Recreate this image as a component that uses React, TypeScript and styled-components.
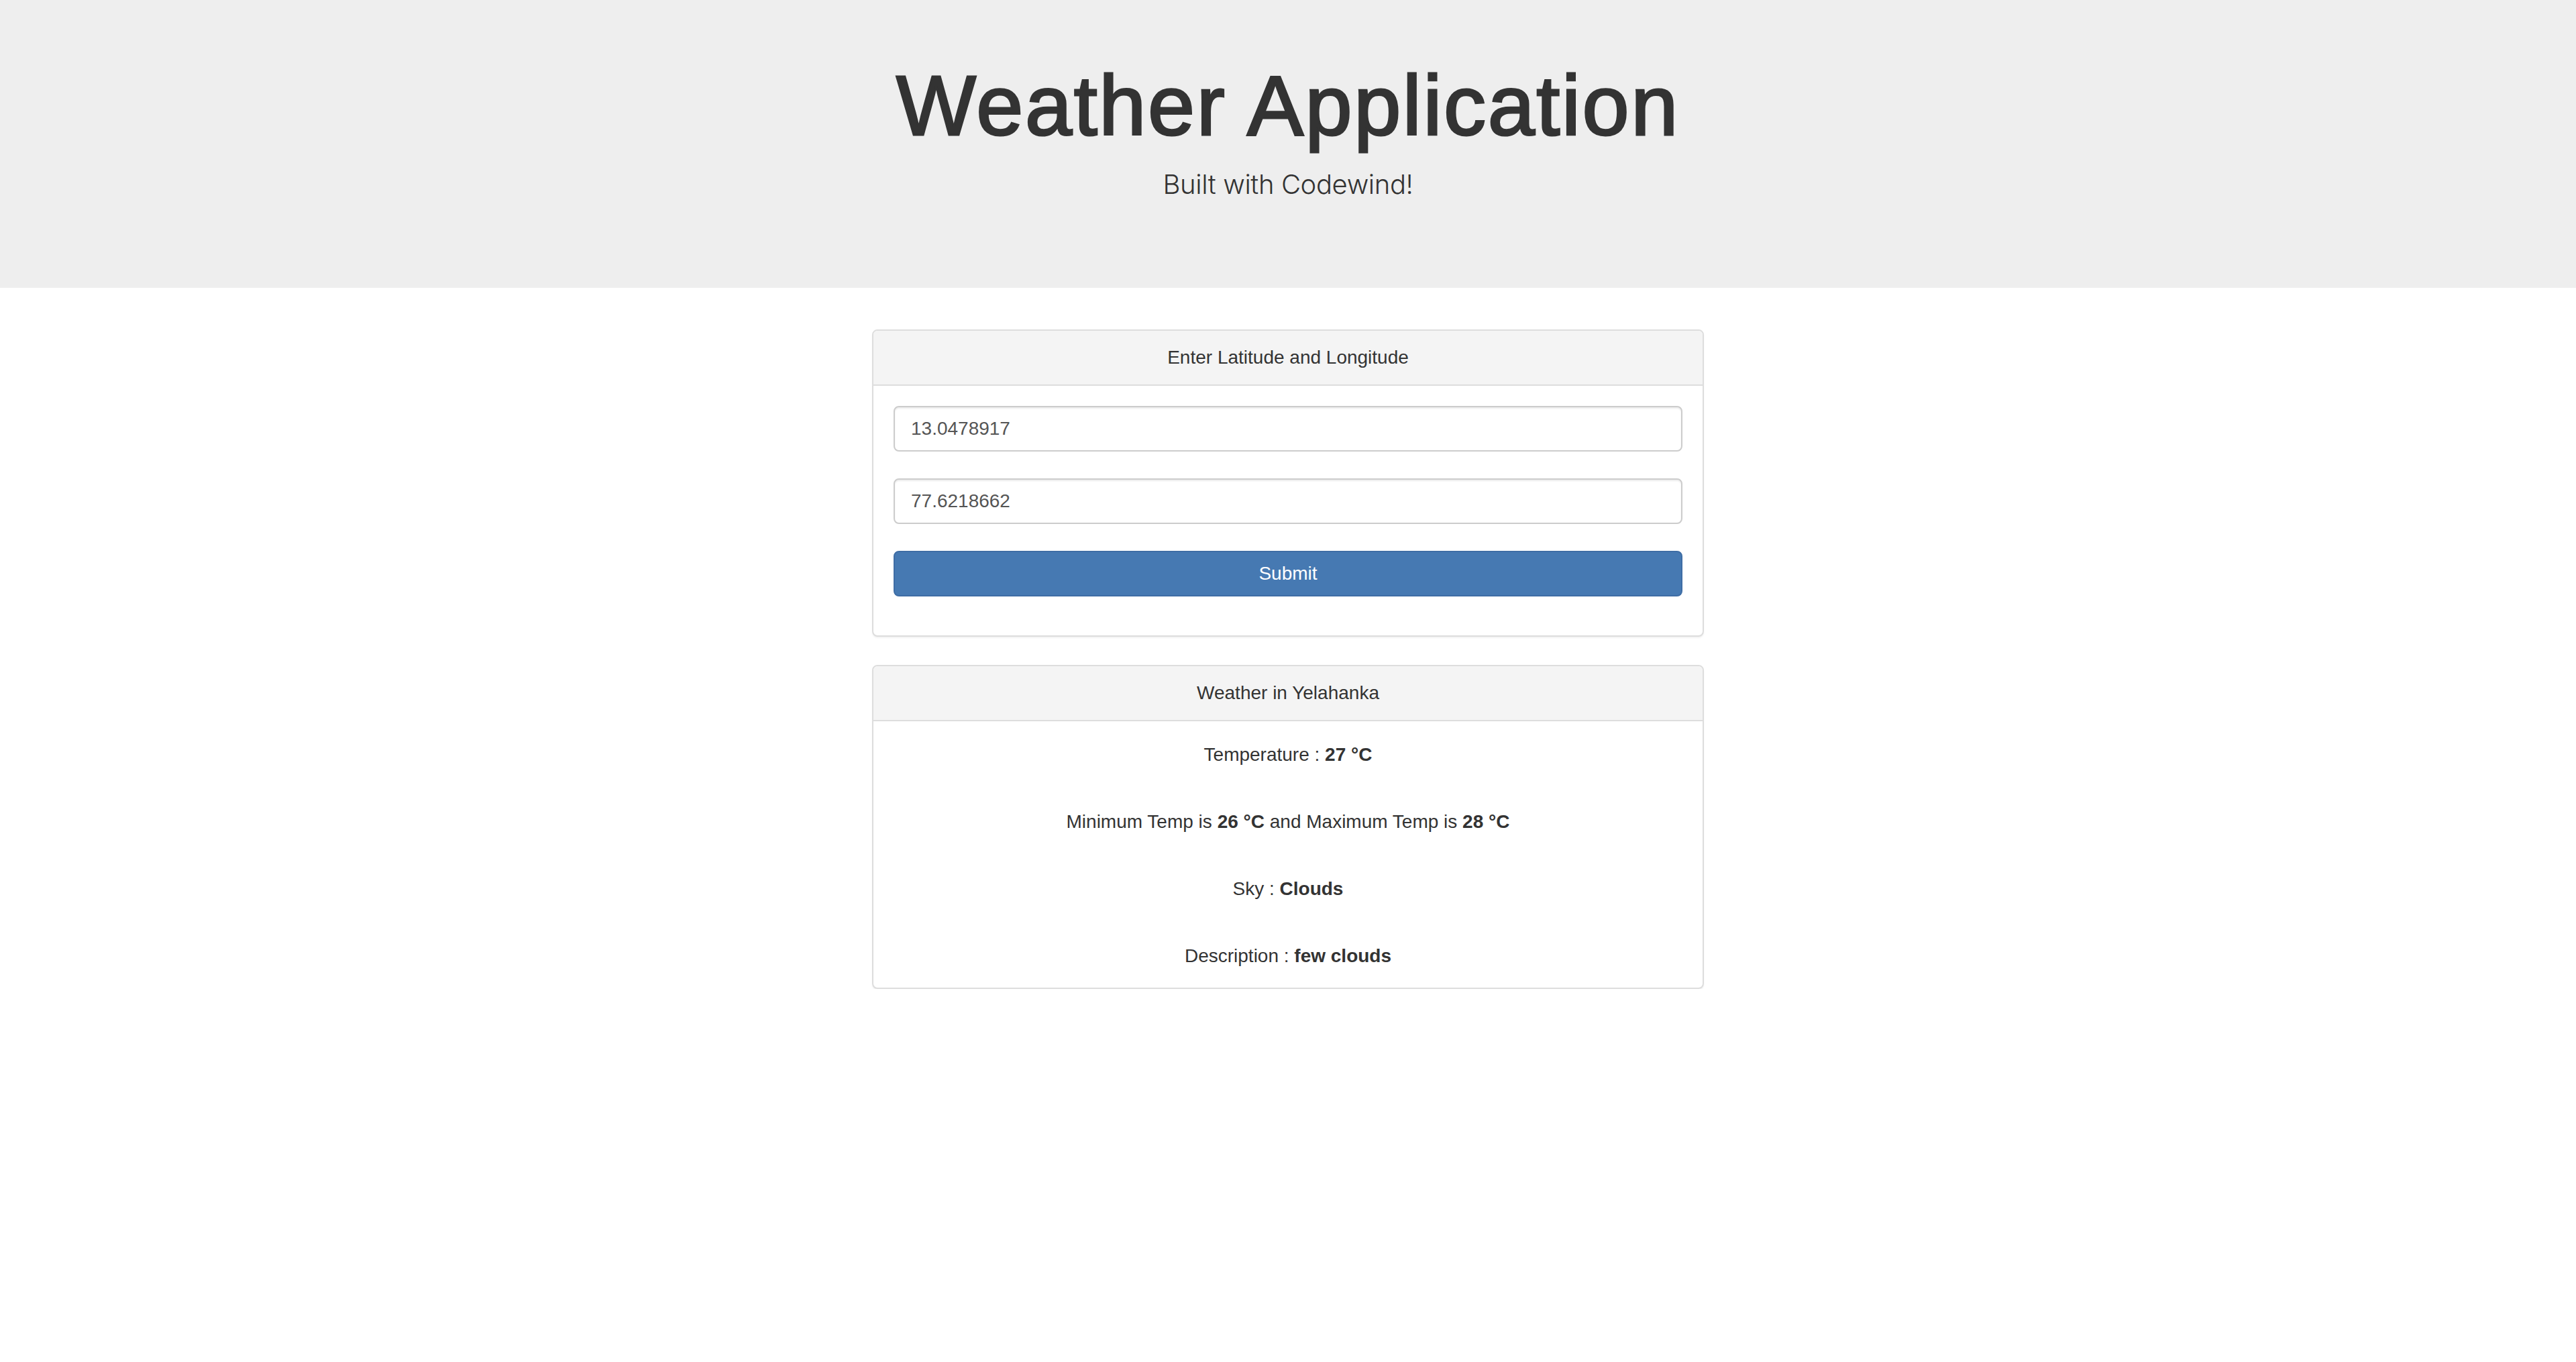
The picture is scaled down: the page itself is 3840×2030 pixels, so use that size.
import styled, { createGlobalStyle } from "styled-components";

const GlobalStyle = createGlobalStyle`
  html, body {
    margin: 0;
    padding: 0;
    background: #fff;
  }

  body {
    font-family: "Liberation Sans", Arial, Helvetica, sans-serif;
    font-size: 28px;
    line-height: 40px;
    color: #333;
  }

  * {
    box-sizing: border-box;
  }
`;

const Jumbotron = styled.header`
  background: #eee;
  padding: 89px 0 124px;
  text-align: center;
`;

// Helvetica Neue Medium is not installed: regular weight plus a thin stroke comes closest
const Title = styled.h1`
  margin: 0 0 17px;
  font-size: 126px;
  line-height: 1.1;
  font-weight: 400;
  letter-spacing: 2.6px;
  color: #333;
  -webkit-text-stroke: 3px #333;
`;

const Tagline = styled.p`
  margin: 0;
  font-family: Inter, "Liberation Sans", sans-serif;
  font-size: 40px;
  line-height: 60px;
  font-weight: 300;
  letter-spacing: -0.4px;
`;

const Main = styled.main`
  width: 1240px;
  margin: 62px auto 0;
  display: flex;
  flex-direction: column;
  gap: 42px;
`;

const Panel = styled.section`
  background: #fff;
  border: 2px solid #ddd;
  border-radius: 8px;
  box-shadow: 0 2px 2px rgba(0, 0, 0, 0.05);
  overflow: hidden;
`;

const PanelHeading = styled.div`
  padding: 20px 30px;
  background: #f4f4f4;
  border-bottom: 2px solid #ddd;
  text-align: center;
`;

const PanelBody = styled.div<{ $gap: number; $bottom: number }>`
  display: flex;
  flex-direction: column;
  gap: ${(p) => p.$gap}px;
  padding: 30px 30px ${(p) => p.$bottom}px;
`;

const Field = styled.input`
  display: block;
  width: 100%;
  height: 68px;
  padding: 12px 24px;
  font: inherit;
  font-size: 28px;
  line-height: 40px;
  color: #555;
  background: #fff;
  border: 2px solid #ccc;
  border-radius: 8px;
  box-shadow: inset 0 2px 2px rgba(0, 0, 0, 0.075);
  outline: none;
`;

const SubmitButton = styled.button`
  display: block;
  width: 100%;
  height: 68px;
  font: inherit;
  font-size: 28px;
  color: #fff;
  background: #4679b2;
  border: 2px solid #3e6da5;
  border-radius: 8px;
  cursor: pointer;
`;

const Reading = styled.p`
  margin: 0;
  text-align: center;
  line-height: 40px;
`;

export default function App() {
  return (
    <>
      <GlobalStyle />
      <Jumbotron>
        <Title>Weather Application</Title>
        <Tagline>Built with Codewind!</Tagline>
      </Jumbotron>

      <Main>
        <Panel>
          <PanelHeading>Enter Latitude and Longitude</PanelHeading>
          <PanelBody $gap={40} $bottom={58}>
            <Field type="text" defaultValue="13.0478917" />
            <Field type="text" defaultValue="77.6218662" />
            <SubmitButton type="button">Submit</SubmitButton>
          </PanelBody>
        </Panel>

        <Panel>
          <PanelHeading>Weather in Yelahanka</PanelHeading>
          <PanelBody $gap={60} $bottom={27}>
            <Reading>
              Temperature : <b>27 °C</b>
            </Reading>
            <Reading>
              Minimum Temp is <b>26 °C</b> and Maximum Temp is <b>28 °C</b>
            </Reading>
            <Reading>
              Sky : <b>Clouds</b>
            </Reading>
            <Reading>
              Description : <b>few clouds</b>
            </Reading>
          </PanelBody>
        </Panel>
      </Main>
    </>
  );
}
